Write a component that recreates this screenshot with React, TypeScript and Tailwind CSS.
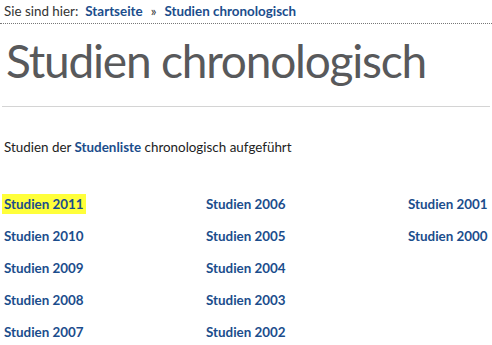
const years = [
  ["2011", "2006", "2001"],
  ["2010", "2005", "2000"],
  ["2009", "2004", ""],
  ["2008", "2003", ""],
  ["2007", "2002", ""],
];

export default function App() {
  return (
    <div className="w-[492px] h-[345px] bg-white overflow-hidden font-['Lato',sans-serif]">
      <div className="h-[24px] border-b border-dotted border-[#777] pl-[4px] pt-[2px] text-[13.4px] leading-[18px]">
        <span className="text-[#333]">Sie sind hier:</span>
        <a className="ml-[7px] font-bold text-[#1b4d8c]">Startseite</a>
        <span className="mx-[8px] text-[#333]">»</span>
        <a className="font-bold text-[#1b4d8c]">Studien chronologisch</a>
      </div>

      <h1 className="pl-[4px] pt-[8px] pb-[16px] mx-[2px] border-b border-[#d4d4d4] text-[46px] leading-[58px] text-[#58595b] tracking-[-1.2px]">
        Studien chronologisch
      </h1>

      <p className="pl-[4px] mt-[31px] text-[13.4px] leading-[18px] text-[#222]">
        Studien der <a className="font-bold text-[#1b4d8c]">Studenliste</a> chronologisch aufgeführt
      </p>

      <div className="mt-[39px] grid grid-cols-[202px_202px_1fr] gap-y-[14px] pl-[4px]">
        {years.flat().map((y, i) => (
          <div key={i} className="h-[18px] text-[13.4px] leading-[18px] font-bold text-[#1b4d8c]">
            {y && (
              <a className={y === "2011" ? "bg-[#ffff3a] px-[2px] -mx-[2px] py-[2px]" : ""}>
                Studien {y}
              </a>
            )}
          </div>
        ))}
      </div>
    </div>
  );
}
